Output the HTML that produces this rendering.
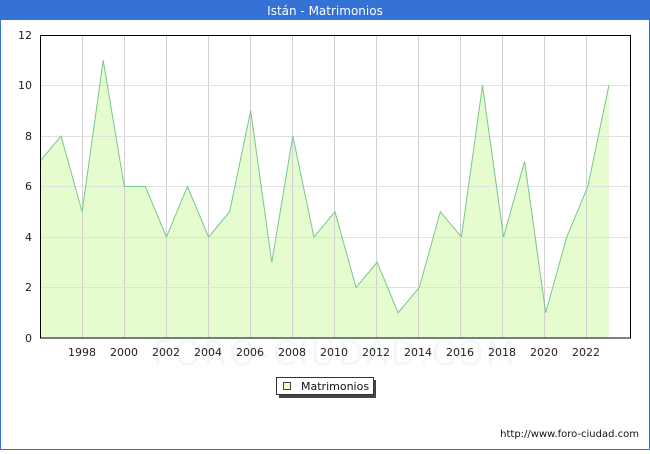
<!DOCTYPE html>
<html><head><meta charset="utf-8"><style>
body{margin:0;width:650px;height:450px;overflow:hidden;background:#fff;font-family:"DejaVu Sans","Liberation Sans",sans-serif}
</style></head><body>
<svg width="650" height="450" xmlns="http://www.w3.org/2000/svg" font-family="DejaVu Sans, Liberation Sans, sans-serif">
<rect x="0.5" y="0.5" width="649" height="449" fill="#fff" stroke="#3472d5"/>
<rect x="0" y="0" width="650" height="20" fill="#3472d5"/>
<text x="325" y="15" fill="#fff" font-size="12" text-anchor="middle">Istán - Matrimonios</text>
<text x="335" y="365" fill="#f4f6f9" font-size="34" text-anchor="middle" letter-spacing="2">FORO-CIUDAD.COM</text>
<g transform="translate(40,338) scale(21.07,-25.25)">
<polygon fill="#e4fcce" points="0,0 0,7 1,8 2,5 3,11 4,6 5,6 6,4 7,6 8,4 9,5 10,9 11,3 12,8 13,4 14,5 15,2 16,3 17,1 18,2 19,5 20,4 21,10 22,4 23,7 24,1 25,4 26,6 27,10 27,0"/>
</g>
<g stroke="#d0d0d0" stroke-width="1" fill="none">
<path d="M82.5 36V338M124.5 36V338M166.5 36V338M208.5 36V338M250.5 36V338M292.5 36V338M334.5 36V338M376.5 36V338M418.5 36V338M460.5 36V338M502.5 36V338M544.5 36V338M586.5 36V338"/>
<path stroke="#e0e0e0" d="M41 287.5H630M41 237.5H630M41 186.5H630M41 136.5H630M41 85.5H630"/>
</g>
<g transform="translate(40,338) scale(21.07,-25.25)">
<polyline fill="none" stroke="#7cc68e" stroke-width="1" vector-effect="non-scaling-stroke" points="0,7 1,8 2,5 3,11 4,6 5,6 6,4 7,6 8,4 9,5 10,9 11,3 12,8 13,4 14,5 15,2 16,3 17,1 18,2 19,5 20,4 21,10 22,4 23,7 24,1 25,4 26,6 27,10"/>
</g>
<rect x="40.5" y="35.5" width="590" height="302.5" fill="none" stroke="#000"/>
<g font-size="11" fill="#222" text-anchor="end">
<text x="32" y="342">0</text><text x="32" y="291">2</text><text x="32" y="241">4</text><text x="32" y="190">6</text><text x="32" y="140">8</text><text x="32" y="89">10</text><text x="32" y="39">12</text>
</g>
<g font-size="11" fill="#222" text-anchor="middle">
<text x="82" y="356">1998</text><text x="124" y="356">2000</text><text x="166" y="356">2002</text><text x="208" y="356">2004</text><text x="250" y="356">2006</text><text x="292" y="356">2008</text><text x="334" y="356">2010</text><text x="376" y="356">2012</text><text x="418" y="356">2014</text><text x="460" y="356">2016</text><text x="502" y="356">2018</text><text x="544" y="356">2020</text><text x="586" y="356">2022</text>
</g>
<rect x="279" y="380" width="97" height="18" fill="#444"/>
<rect x="276.5" y="377.5" width="97" height="17" fill="#fff" stroke="#333"/>
<rect x="283.5" y="382.5" width="7" height="7" fill="#e4fcce" stroke="#444"/>
<text x="301" y="390" font-size="11" fill="#111">Matrimonios</text>
<text x="639" y="437" font-size="10" fill="#111" text-anchor="end">http://www.foro-ciudad.com</text>
</svg>
</body></html>
